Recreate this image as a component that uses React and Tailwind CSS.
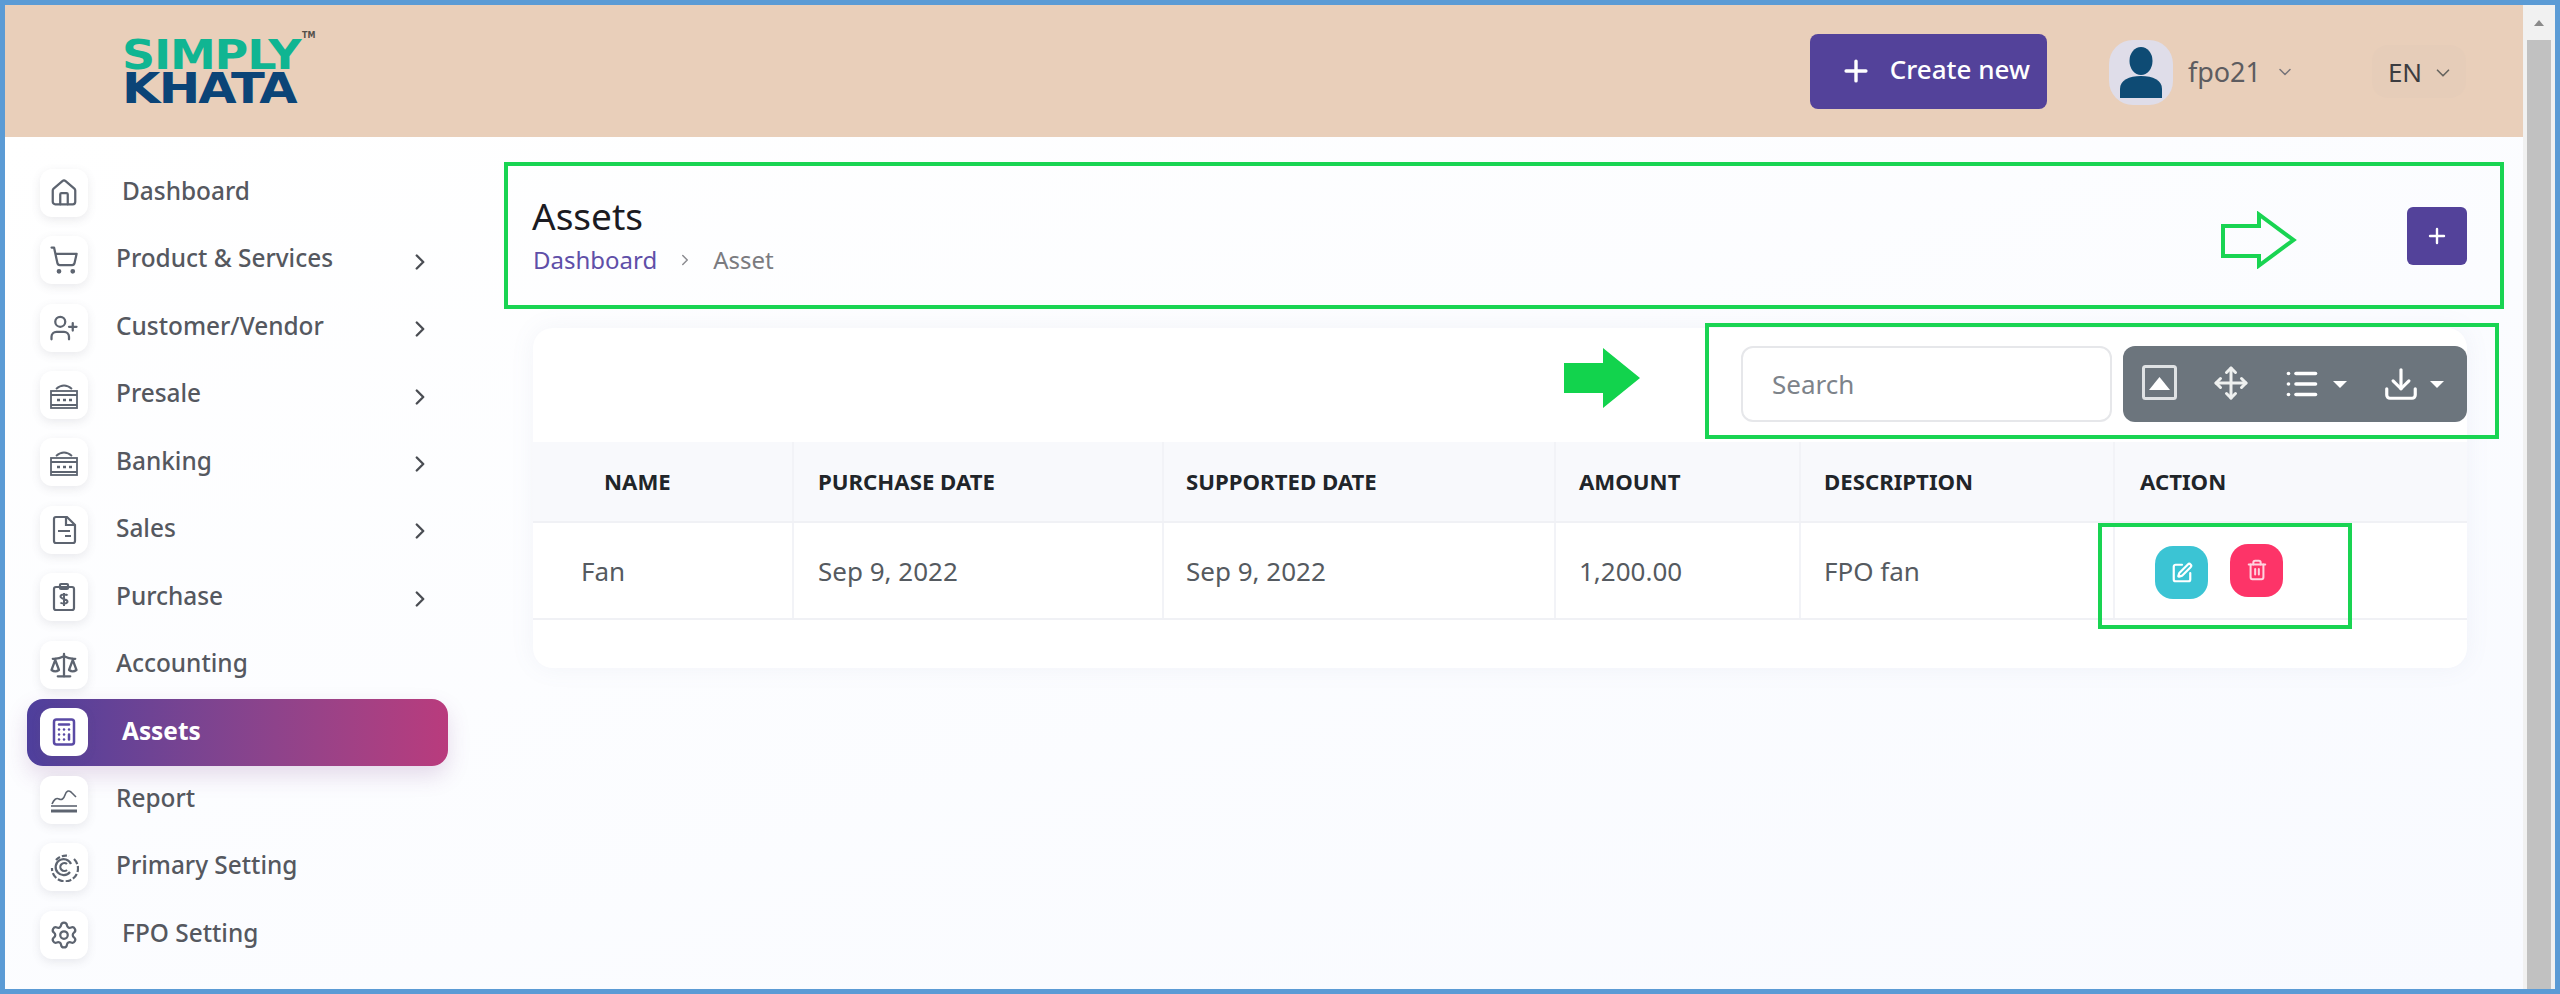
import {
  ChevronRight,
  ChevronDown,
  House,
  ShoppingCart,
  UserPlus,
  Scale,
  Calculator,
  Settings,
  Plus,
  Move,
  List,
  Download,
  SquarePen,
  Trash2,
} from "lucide-react";

const Bank = () => (
  <svg width="30" height="30" viewBox="0 0 30 30" fill="none" stroke="currentColor" strokeWidth="1.800">
    <path d="M7 9 Q15 2 23 9" />
    <rect x="2" y="11" width="26" height="17" />
    <path d="M2 15h26M2 25h26" />
    <path d="M8 20h3M14 20h3M20 20h3" strokeWidth="2.600" />
  </svg>
);

const SalesIcon = () => (
  <svg width="26" height="30" viewBox="0 0 26 30" fill="none" stroke="currentColor" strokeWidth="2.200">
    <path d="M3 4a2 2 0 0 1 2-2h11l8 8v16a2 2 0 0 1-2 2H5a2 2 0 0 1-2-2z" />
    <path d="M15 2v8h9M7 16h12M14 21h6" />
  </svg>
);

const PurchaseIcon = () => (
  <svg width="26" height="30" viewBox="0 0 26 30" fill="none" stroke="currentColor" strokeWidth="2.200">
    <rect x="3" y="5" width="20" height="23" rx="2" />
    <rect x="9" y="2" width="8" height="5" rx="1" />
    <path d="M16.500 13.500c-1-1.500-7-1.500-7 1s7 2.500 7 5-6 2.500-7 1M13 11v13" strokeWidth="2" />
  </svg>
);

const ReportIcon = () => (
  <svg width="30" height="30" viewBox="0 0 30 30" fill="none" stroke="currentColor">
    <path d="M3 19 Q6 12 10 14 T16 10 T22 7 L27 12" strokeWidth="1.600" />
    <path d="M2 21h26" strokeWidth="1.600" />
    <path d="M2 26h26" strokeWidth="3" />
  </svg>
);

const PrimaryIcon = () => (
  <svg width="30" height="30" viewBox="0 0 30 30" fill="none" stroke="currentColor" strokeWidth="2.200">
    <path d="M7 8a13 13 0 0 1 13-4" strokeDasharray="5 2" />
    <path d="M25 7a13 13 0 1 1-22 9" strokeDasharray="6 2" />
    <path d="M22 12a8 8 0 1 0-1 8" />
    <path d="M18 12a4 4 0 1 0 0 6" />
  </svg>
);

const NAV = [
  { label: "Dashboard", icon: <House size={30} strokeWidth={1.8} />, shift: true },
  { label: "Product & Services", icon: <ShoppingCart size={30} strokeWidth={1.8} />, arrow: true },
  { label: "Customer/Vendor", icon: <UserPlus size={30} strokeWidth={1.8} />, arrow: true },
  { label: "Presale", icon: <Bank />, arrow: true },
  { label: "Banking", icon: <Bank />, arrow: true },
  { label: "Sales", icon: <SalesIcon />, arrow: true },
  { label: "Purchase", icon: <PurchaseIcon />, arrow: true },
  { label: "Accounting", icon: <Scale size={30} strokeWidth={1.8} /> },
  { label: "Assets", icon: <Calculator size={30} strokeWidth={2} />, active: true, shift: true },
  { label: "Report", icon: <ReportIcon /> },
  { label: "Primary Setting", icon: <PrimaryIcon /> },
  { label: "FPO Setting", icon: <Settings size={30} strokeWidth={1.8} />, shift: true },
];

const COLUMNS = [
  { head: "NAME", cell: "Fan", headClass: "pl-[71px]", cellClass: "pl-[48px]" },
  { head: "PURCHASE DATE", cell: "Sep 9, 2022", headClass: "pl-[24px]", cellClass: "pl-[24px]" },
  { head: "SUPPORTED DATE", cell: "Sep 9, 2022", headClass: "pl-[22px]", cellClass: "pl-[22px]" },
  { head: "AMOUNT", cell: "1,200.00", headClass: "pl-[23px]", cellClass: "pl-[23px]" },
  { head: "DESCRIPTION", cell: "FPO fan", headClass: "pl-[23px]", cellClass: "pl-[23px]" },
];

function Caret() {
  return <span className="w-0 h-0 border-x-[7px] border-x-transparent border-t-[7px] border-t-white" />;
}

function NavRow({ item }) {
  return (
    <div
      className={`flex items-center h-[67.450px] ml-[22px] w-[421px] pl-[13px] pr-[15px] ${
        item.active
          ? "rounded-2xl bg-linear-to-r from-[#4e3f9c] to-[#b93b7d] shadow-[0_10px_22px_rgba(120,60,140,0.18)] text-white"
          : "text-[#55585f]"
      }`}
    >
      <div
        className={`w-[48px] h-[48px] flex items-center justify-center rounded-xl bg-white shadow-[0_3px_10px_rgba(90,90,110,0.12)] ${
          item.active ? "text-[#5a4aa5]" : "text-[#5d6470]"
        }`}
      >
        {item.icon}
      </div>
      <span
        className={`flex-1 text-[24.400px] leading-none -mt-[3px] ${item.shift ? "ml-[34px]" : "ml-[28px]"} ${
          item.active ? "font-bold" : "font-medium"
        }`}
      >
        {item.label}
      </span>
      {item.arrow && <ChevronRight size={26} strokeWidth={2.2} className="mt-[3px] text-[#4a4d53]" />}
    </div>
  );
}

export default function App() {
  return (
    <div className="relative w-[2560px] h-[994px] overflow-hidden flex border-[5px] border-[#5b9bd5] bg-white font-['Noto_Sans',sans-serif]">
      <div className="flex-1 flex flex-col min-w-0">
        <header className="h-[132px] shrink-0 bg-[#e9cfba] flex items-center pl-[117px] pr-[57px]">
          <div className="relative flex flex-col w-[190px] mt-[1px] font-['DejaVu_Sans',sans-serif] font-bold leading-none">
            <span className="inline-block origin-left scale-x-[1.15] text-[#10b592] text-[40px] leading-[34px] tracking-[-1px] h-[34px]">SIMPLY</span>
            <span className="inline-block origin-left scale-x-[1.18] text-[#0b4477] text-[42px] leading-[33px] tracking-[-1.500px] h-[33px]">KHATA</span>
            <span className="absolute left-[180px] -top-[6px] text-[8px] text-[#55504a]">TM</span>
          </div>

          <button className="ml-auto w-[237px] h-[75px] rounded-lg bg-[#53429a] text-white flex items-center justify-center gap-[17px] text-[26px] font-medium pl-[12px]">
            <Plus size={34} strokeWidth={2.400} />
            <span className="-mt-[4px]">Create new</span>
          </button>

          <div className="ml-[62px] mt-[2px] w-[64px] h-[65px] rounded-[24px] bg-[#dfdde9] flex items-center justify-center">
            <svg width="44" height="52" viewBox="0 0 44 52" fill="#0e4b74">
              <ellipse cx="22" cy="15" rx="11.500" ry="14" />
              <path d="M1 52V43C1 34 10 30 22 30s21 4 21 13v9z" />
            </svg>
          </div>
          <span className="ml-[15px] mt-[2px] text-[27px] text-[#5d5c60]">fpo21</span>
          <ChevronDown size={20} strokeWidth={1.800} className="ml-[14px] mt-[2px] text-[#77757a]" />

          <div className="ml-[77px] mt-[1px] w-[94px] h-[53px] rounded-2xl bg-[#e6cdb9] flex items-center justify-center gap-[10px] pl-[4px]">
            <span className="text-[26px] mt-[2px] text-[#3c3c40]">EN</span>
            <ChevronDown size={22} strokeWidth={1.800} className="mt-[2px] text-[#66645f]" />
          </div>
        </header>

        <div className="flex-1 flex min-h-0 bg-linear-to-br from-white to-[#f8faff]">
          <aside className="w-[480px] shrink-0 pt-[22px]">
            {NAV.map((item) => (
              <NavRow key={item.label} item={item} />
            ))}
          </aside>

          <main className="flex-1 min-w-0 pl-[48px] pr-[56px]">
            <div className="flex items-start justify-between h-[191px] pt-[56px]">
              <div>
                <h1 className="text-[37px] leading-[46px] text-[#1b1b22] -ml-[1px]">Assets</h1>
                <div className="mt-[5px] flex items-center text-[24px] leading-[32px]">
                  <span className="text-[#5f4fa8]">Dashboard</span>
                  <ChevronRight size={18} className="mx-[19px] text-[#8b8b90]" />
                  <span className="text-[#7b7b80]">Asset</span>
                </div>
              </div>
              <button className="mt-[14px] w-[60px] h-[58px] rounded-md bg-[#53429a] flex items-center justify-center text-white">
                <Plus size={24} strokeWidth={2.400} />
              </button>
            </div>

            <section className="h-[340px] bg-white rounded-[20px] shadow-[0_0_24px_rgba(120,130,170,0.08)]">
              <div className="h-[114px] pt-[18px] flex justify-end items-start gap-[11px]">
                <div className="w-[371px] h-[76px] rounded-xl border-2 border-[#e6e7ea] flex items-center pl-[29px] text-[26px] text-[#7d838a]">
                  Search
                </div>
                <div className="w-[344px] h-[76px] rounded-xl bg-[#6c757d] flex items-center text-white pl-[19px]">
                  <svg width="35" height="35" viewBox="0 0 35 35" fill="none" className="-mt-[3px]">
                    <rect x="1.500" y="1.500" width="32" height="32" rx="2" stroke="#dfe2e4" strokeWidth="3" />
                    <path d="M7 25 L17.500 12 L28 25z" fill="white" />
                  </svg>
                  <Move size={36} strokeWidth={2} className="ml-[36px] -mt-[2px] text-[#eef0ef]" />
                  <List size={36} strokeWidth={2.400} className="ml-[35px]" />
                  <span className="ml-[13px] flex"><Caret /></span>
                  <Download size={38} strokeWidth={2} className="ml-[35px]" />
                  <span className="ml-[10px] flex"><Caret /></span>
                </div>
              </div>

              <div className="grid grid-cols-[261px_370px_392px_245px_314px_1fr] h-[81px] bg-[#f8f9fc] border-b-2 border-[#f0f1f5] text-[22.200px] font-bold text-[#212529]">
                {COLUMNS.map((col) => (
                  <div key={col.head} className={`flex items-center border-r-2 border-[#f2f3f7] ${col.headClass}`}>
                    {col.head}
                  </div>
                ))}
                <div className="flex items-center pl-[25px]">ACTION</div>
              </div>

              <div className="grid grid-cols-[261px_370px_392px_245px_314px_1fr] h-[97px] border-b-2 border-[#f0f1f5] text-[26px] text-[#555a60]">
                {COLUMNS.map((col) => (
                  <div key={col.head} className={`flex items-center border-r-2 border-[#f2f3f7] pt-[2px] ${col.cellClass}`}>
                    {col.cell}
                  </div>
                ))}
                <div className="flex items-center gap-[22px] pl-[40px] pt-[4px]">
                  <button className="w-[53px] h-[53px] rounded-[18px] bg-[#3bc4d4] flex items-center justify-center text-white">
                    <SquarePen size={22} strokeWidth={2.400} />
                  </button>
                  <button className="w-[53px] h-[53px] -mt-[5px] rounded-[18px] bg-[#fd3468] flex items-center justify-center text-[#ffd3df]">
                    <Trash2 size={22} strokeWidth={2.200} />
                  </button>
                </div>
              </div>
            </section>
          </main>
        </div>
      </div>

      <div className="w-[32px] shrink-0 flex flex-col bg-[#f1f1f1] pl-[4px] pr-[4px] items-stretch">
        <div className="h-[35px] flex items-center justify-center">
          <span className="w-0 h-0 border-x-[5px] border-x-transparent border-b-[6px] border-b-[#8a8a8a]" />
        </div>
        <div className="flex-1 bg-[#c1c1c1]" />
      </div>

      {/* annotations drawn on top of the screenshot */}
      <div className="absolute left-[499px] top-[157px] w-[2000px] h-[147px] border-4 border-[#19d452]" />
      <div className="absolute left-[1700px] top-[318px] w-[794px] h-[116px] border-4 border-[#19d452]" />
      <div className="absolute left-[2093px] top-[518px] w-[254px] h-[106px] border-4 border-[#19d452]" />
      <svg className="absolute left-[2216px] top-[206px]" width="76" height="58" viewBox="0 0 76 58" fill="none">
        <path d="M2 15H38V3.500L72.500 29 38 54.500V45H2z" stroke="#19d452" strokeWidth="4" />
      </svg>
      <svg className="absolute left-[1559px] top-[343px]" width="76" height="60" viewBox="0 0 76 60">
        <path d="M0 15H39V0L76 30 39 60V45H0z" fill="#12d34d" />
      </svg>
    </div>
  );
}
